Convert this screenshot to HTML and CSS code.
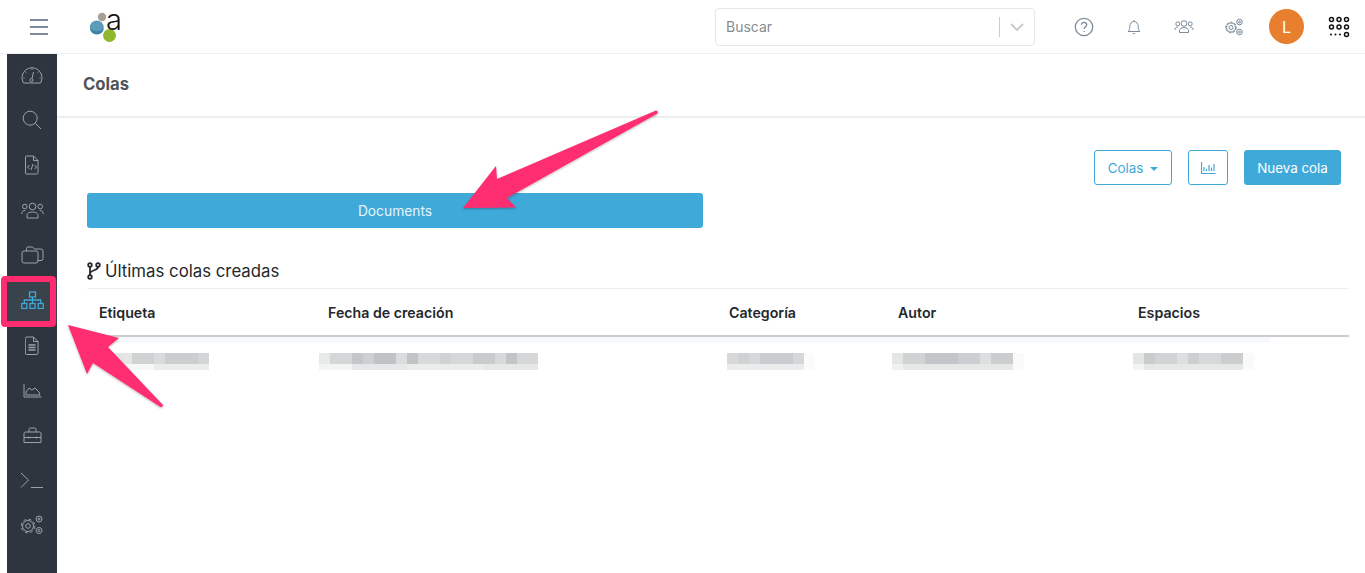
FILE: index.html

```html
<!DOCTYPE html>
<html>
<head>
  <title>Colas</title>
  <link rel="stylesheet" href="styles.css">
</head>
<body>
  <header class="topbar">
    <button class="burger"><span></span><span></span><span></span></button>
    <div class="logo">
      <svg width="34" height="34" viewBox="0 0 34 34">
        <circle cx="12" cy="7" r="4.200" fill="#a89f98"/>
        <ellipse cx="6.800" cy="17.500" rx="7" ry="7" fill="#5b9cb8"/>
        <path d="M0 18.500a7 7 0 0 0 13.800 0a8 5 0 0 1-13.800 0z" fill="#3d83a8"/>
        <circle cx="19.500" cy="25.500" r="6.500" fill="#8fb82e"/>
        <text class="logo-a" x="16" y="20">a</text>
      </svg>
    </div>
    <div class="search">
      <span class="search-text">Buscar</span>
      <span class="search-sep"></span>
      <svg class="search-arrow" width="14" height="8" viewBox="0 0 14 8"><path d="M1 1l6 6l6-6" fill="none" stroke="#ccc" stroke-width="2"/></svg>
    </div>
    <nav class="top-icons">
      <svg class="top-icon" width="20" height="20" viewBox="0 0 20 20"><circle cx="10" cy="10" r="8.700"/><path d="M7.500 7.800c0-3.300 5.200-3.300 5.200 0c0 2-2.600 2-2.600 4.200M10.100 14v1"/></svg>
      <svg class="top-icon" width="16" height="16" viewBox="0 0 16 16"><path d="M2 12.500c1.500-1 1.800-2.500 1.800-5c0-3 1.800-5 4.200-5s4.200 2 4.200 5c0 2.500.3 4 1.800 5zM6.700 14c.5 1 2.100 1 2.600 0M8 1v1.500"/></svg>
      <svg class="top-icon" width="20" height="16" viewBox="0 0 20 16"><circle cx="10" cy="4.500" r="2.800"/><circle cx="3.800" cy="4.800" r="2"/><circle cx="16.200" cy="4.800" r="2"/><path d="M5.500 13.500v-2c0-2 2-2.800 4.500-2.800s4.500 .8 4.500 2.800v2zM1 11c0-2 1-3 3-3M19 11c0-2-1-3-3-3"/></svg>
      <svg class="top-icon" width="20" height="18" viewBox="0 0 20 18"><circle cx="7" cy="9.500" r="2"/><circle cx="7" cy="9.500" r="5.300" stroke-dasharray="2.500 1.400"/><circle cx="7" cy="9.500" r="4.500"/><circle cx="15.500" cy="4" r="2.800"/><circle cx="15.500" cy="4" r="1"/><circle cx="15.500" cy="14" r="2.800"/><circle cx="15.500" cy="14" r="1"/></svg>
      <div class="avatar">L</div>
      <svg class="apps" width="22" height="22" viewBox="0 0 22 22">
        <g fill="none" stroke="#111" stroke-width="1.500">
          <circle cx="3.500" cy="3.500" r="2"/><circle cx="11" cy="3.500" r="2"/><circle cx="18.500" cy="3.500" r="2"/>
          <circle cx="3.500" cy="11" r="2"/><circle cx="11" cy="11" r="2"/><circle cx="18.500" cy="11" r="2"/>
          <circle cx="18.500" cy="18.500" r="2"/>
        </g>
        <g fill="#111"><circle cx="3" cy="18.500" r="1"/><circle cx="7.500" cy="18.500" r="1"/><circle cx="12" cy="18.500" r="1"/></g>
      </svg>
    </nav>
  </header>

  <div class="layout">
    <aside class="sidebar">
      <div class="side-item">
        <svg width="22" height="18" viewBox="0 0 22 18"><path d="M2.500 17a10 10 0 1 1 17 0zM11 2.500v1.500M4.500 6l1 .7M17.500 6l-1 .7M2.500 12h1M18.500 12h1"/><circle cx="10.500" cy="14" r="1.600"/><path d="M11 12.500l1.500-6.500"/></svg>
      </div>
      <div class="side-item">
        <svg width="20" height="20" viewBox="0 0 20 20"><circle cx="8.200" cy="8.200" r="7"/><path d="M13.300 13.300l5.700 5.700"/></svg>
      </div>
      <div class="side-item">
        <svg width="14" height="20" viewBox="0 0 14 20"><path d="M1.500 1h7l4.500 4.500v12a1.500 1.500 0 0 1-1.500 1.500h-10a1 1 0 0 1-1-1v-16a1 1 0 0 1 1-1zM8.500 1v4.500h4.500M4.500 10l-2 2l2 2M9.500 10l2 2l-2 2M8 9l-2 6"/></svg>
      </div>
      <div class="side-item">
        <svg width="23" height="17" viewBox="0 0 23 17"><circle cx="11.500" cy="4.500" r="3.300"/><circle cx="3.800" cy="4.500" r="2.300"/><circle cx="19.200" cy="4.500" r="2.300"/><path d="M6 16v-2.500c0-2.500 2.500-3.500 5.500-3.500s5.500 1 5.500 3.500v2.500zM.8 12c0-2.500 1-3.500 3.500-3.500M22.200 12c0-2.500-1-3.500-3.500-3.500"/></svg>
      </div>
      <div class="side-item">
        <svg width="23" height="18" viewBox="0 0 23 18"><path d="M5.500 5v-2.500a1.500 1.500 0 0 1 1.500-1.500h4.500l2 2h6.500a2 2 0 0 1 2 2v7.500a2 2 0 0 1-2 2h-3.500"/><rect x="1" y="5" width="16" height="12" rx="2"/></svg>
      </div>
      <div class="side-item side-item-active">
        <svg width="23" height="18" viewBox="0 0 23 18"><rect x="8.500" y="1" width="6" height="5"/><rect x=".8" y="12.500" width="5" height="5"/><rect x="9" y="12.500" width="5" height="5"/><rect x="17.200" y="12.500" width="5" height="5"/><path d="M11.500 6v6.500M3.300 12.500v-3.500h16.400v3.500"/></svg>
      </div>
      <div class="side-item">
        <svg width="14" height="19" viewBox="0 0 14 19"><path d="M1.800 1h6.700l4.500 4.500v11.500a1.500 1.500 0 0 1-1.500 1.500h-9.700a1.500 1.500 0 0 1-1.500-1.500v-14.500a1.500 1.500 0 0 1 1.500-1.500zM8.500 1v4.500h4.500"/><path class="thick" d="M3.500 9h7M3.500 11.500h7M3.500 14h7"/></svg>
      </div>
      <div class="side-item">
        <svg width="19" height="15" viewBox="0 0 19 15"><path d="M1 1v13h17.500M3 12v-3l3-4l3 2l3-2l4 4l1 3z"/></svg>
      </div>
      <div class="side-item">
        <svg width="19" height="17" viewBox="0 0 19 17"><path d="M1 6.500a1.500 1.500 0 0 1 1.500-1.500h14a1.500 1.500 0 0 1 1.500 1.500v9h-17zM6 5v-2.500a1.500 1.500 0 0 1 1.500-1.500h4a1.500 1.500 0 0 1 1.500 1.500v2.500M1 10.500h17M5.500 9.500v2M13.500 9.500v2"/></svg>
      </div>
      <div class="side-item">
        <svg width="24" height="17" viewBox="0 0 24 17"><path d="M1 1l7.500 7l-7.500 7.500M11 15.500h12"/></svg>
      </div>
      <div class="side-item">
        <svg width="24" height="20" viewBox="0 0 24 20"><circle cx="8" cy="11" r="2.300"/><circle cx="8" cy="11" r="5.500"/><circle cx="8" cy="11" r="6.800" stroke-dasharray="3 2.400"/><circle cx="19" cy="4" r="3"/><circle cx="19" cy="4" r="1"/><circle cx="19" cy="15.500" r="3"/><circle cx="19" cy="15.500" r="1"/></svg>
      </div>
    </aside>

    <main class="content">
      <div class="page-title">Colas</div>
      <div class="page-body">
        <div class="toolbar">
          <button class="btn btn-outline btn-menu">Colas<span class="caret"></span></button>
          <button class="btn btn-outline btn-chart">
            <svg width="15" height="13" viewBox="0 0 15 13"><path d="M.5 1v11.500h14M3 6v4M5.500 8v2M8 4v6M10.500 6.500v3.500M13 3v7" fill="none" stroke="#3fa9d9" stroke-width="1.200"/></svg>
          </button>
          <button class="btn btn-solid">Nueva cola</button>
        </div>
        <button class="queue-btn">Documents</button>
        <h2 class="section-title">
          <svg width="14" height="18" viewBox="0 0 14 18"><g fill="none" stroke="#23282c" stroke-width="1.800"><circle cx="3" cy="3" r="1.800"/><circle cx="3" cy="15" r="1.800"/><circle cx="11" cy="3" r="1.800"/><path d="M3 5v8M11 5c0 4-8 2.500-8 7"/></g></svg>
          Últimas colas creadas
        </h2>
        <div class="table">
          <div class="table-head">
            <div>Etiqueta</div>
            <div>Fecha de creación</div>
            <div>Categoría</div>
            <div>Autor</div>
            <div>Espacios</div>
          </div>
          <div class="table-strip"></div>
          <div class="table-row">
            <div><div class="mosaic mosaic-1"></div></div>
            <div><div class="mosaic mosaic-2"></div></div>
            <div><div class="mosaic mosaic-3"></div></div>
            <div><div class="mosaic mosaic-4"></div></div>
            <div><div class="mosaic mosaic-5"></div></div>
          </div>
        </div>
      </div>
    </main>
  </div>

  <div class="highlight"></div>
  <svg class="arrows" width="1365" height="573" viewBox="0 0 1365 573">
    <defs>
      <filter id="arrow-shadow" x="-10%" y="-10%" width="120%" height="120%">
        <feDropShadow dx="0" dy="1" stdDeviation="1" flood-color="#000" flood-opacity=".3"/>
      </filter>
    </defs>
    <g fill="#ff2d6f" filter="url(#arrow-shadow)">
      <path d="M656 110.500q2.500 .5 1.500 3l-150.500 84.500l9 9.500l-53 0.500l33-42l1 13z"/>
      <path d="M68 325l51 13l-11 9l55 58q0 2.500-2.500 2l-67.500-44l-6 11z"/>
    </g>
  </svg>
</body>
</html>
```

FILE: styles.css

```css
* {
  box-sizing: border-box;
}
html, body {
  margin: 0;
  height: 573px;
  overflow: hidden;
}
body {
  font-family: "Inter", "Liberation Sans", sans-serif;
  font-size: 14px;
  color: #23282c;
  background-color: #fff;
}
button {
  font-family: inherit;
}

/* top bar */
.topbar {
  display: flex;
  align-items: center;
  height: 54px;
  border-bottom: 1px solid #eceeef;
}
.burger {
  display: flex;
  flex-direction: column;
  gap: 5px;
  width: 18px;
  margin: 0 0 0 30px;
  padding: 0;
  border: none;
  background: none;
}
.burger span {
  display: block;
  height: 2px;
  background-color: #7d8a99;
}
.logo {
  display: flex;
  margin-left: 42px;
}
.logo svg {
  overflow: visible;
}
.logo-a {
  font-family: "Inter", sans-serif;
  font-size: 29px;
  font-weight: 300;
  fill: #111;
}
.search {
  display: flex;
  align-items: center;
  width: 320px;
  height: 38px;
  margin-left: 591px;
  padding-left: 10px;
  border: 1px solid #e4e7ea;
  border-radius: 4px;
}
.search-text {
  flex: 1;
  color: #878c90;
  font-size: 14px;
}
.search-sep {
  width: 1px;
  height: 20px;
  background-color: #ccc;
}
.search-arrow {
  margin: 0 10px;
}
.top-icons {
  display: flex;
  align-items: center;
  margin-left: 39px;
}
.top-icon {
  fill: none;
  stroke: #7b8a9a;
  stroke-width: 1;
}
.top-icon:nth-child(1) {
  stroke-width: 1.300;
}
.top-icon:nth-child(2) {
  margin-left: 32px;
}
.top-icon:nth-child(3) {
  margin-left: 32px;
}
.top-icon:nth-child(4) {
  margin-left: 30px;
}
.avatar {
  display: flex;
  align-items: center;
  justify-content: center;
  width: 35px;
  height: 35px;
  margin-left: 25px;
  border-radius: 50%;
  background-color: #e87f2e;
  color: #fff;
  font-size: 16px;
}
.apps {
  margin-left: 24px;
}

/* sidebar */
.layout {
  display: flex;
  height: 519px;
  padding-left: 7px;
}
.sidebar {
  flex: none;
  width: 50px;
  background-color: #2f353e;
}
.side-item {
  display: flex;
  align-items: center;
  justify-content: center;
  height: 45px;
  padding-bottom: 3px;
}
.side-item svg {
  fill: none;
  stroke: #9aa3ad;
  stroke-width: 1;
}
.side-item .thick {
  stroke-width: 1.300;
}
.side-item-active {
  background-color: #3a424b;
}
.side-item-active svg {
  stroke: #3fa9d9;
  stroke-width: 1.300;
}

/* main */
.content {
  flex: 1;
}
.page-title {
  height: 64px;
  padding: 20px 26px 0;
  border-bottom: 2px solid #edefef;
  color: #4f5459;
  font-size: 16.700px;
  font-weight: 700;
  line-height: 20px;
}
.page-body {
  padding: 32px 16px 0 30px;
}
.toolbar {
  display: flex;
  justify-content: flex-end;
  gap: 16px;
  padding-right: 8px;
}
.btn {
  height: 35px;
  border-radius: 3px;
  border: 1px solid #3fa9d9;
  font-size: 13.400px;
  padding: 0 13px;
}
.btn-outline {
  background-color: #fff;
  color: #3fa9d9;
}
.btn-menu {
  width: 78px;
  padding: 0;
}
.btn-chart {
  display: flex;
  align-items: center;
  justify-content: center;
  width: 40px;
  padding: 0;
}
.btn-solid {
  background-color: #3fa9d9;
  color: #fff;
  width: 97px;
  padding: 0;
}
.caret {
  display: inline-block;
  margin-left: 7px;
  border-top: 4px solid #3fa9d9;
  border-left: 4px solid transparent;
  border-right: 4px solid transparent;
  vertical-align: 2px;
}
.queue-btn {
  display: block;
  width: 616px;
  height: 35px;
  margin-top: 8px;
  border: none;
  border-radius: 3px;
  background-color: #3fa9d9;
  color: #e6f4fb;
  font-size: 13.800px;
}
.section-title {
  display: flex;
  align-items: center;
  gap: 4px;
  height: 32px;
  margin: 27px 0 0;
  font-size: 16.800px;
  font-weight: 400;
}

/* table */
.table {
  border-top: 1px solid #eceeef;
  margin-top: 1px;
}
.table-head, .table-row {
  display: grid;
  grid-template-columns: 229px 401px 169px 240px 1fr;
  padding-left: 12px;
}
.table-head {
  height: 48px;
  align-items: center;
  border-bottom: 2px solid #c8ced3;
  font-size: 14.200px;
  font-weight: 600;
}
.table-strip {
  width: 1183px;
  height: 6px;
  background-color: #f7f9fa;
}
.table-row {
  padding-top: 10px;
}
.mosaic {
  height: 17px;
  background-repeat: no-repeat;
  background-size: 100% 11px, 100% 6px;
  background-position: 0 0, 0 11px;
}
.mosaic-1 {
  width: 99px;
  margin-left: 11px;
  background-image:
    linear-gradient(90deg, #e4e6e6 0 22px, #cfd1d3 22px 44px, #d8dadb 44px 55px, #cbcdcf 55px 88px, #d3d5d7 88px),
    linear-gradient(90deg, #f6f7f7 0 44px, #ebeded 44px);
}
.mosaic-2 {
  width: 219px;
  margin-left: -9px;
  background-image:
    linear-gradient(90deg, #e8eaea 0 11px, #d4d6d8 11px 33px, #c4c6c9 33px 44px, #cdcfd1 44px 55px, #c0c2c5 55px 77px, #dbdddd 77px 88px, #c1c4c6 88px 99px, #d7d9da 99px 121px, #cfd1d3 121px 132px, #d5d7d8 132px 154px, #c9cbcd 154px 176px, #d7d9da 176px 187px, #c2c4c7 187px 198px, #d5d7d9 198px),
    linear-gradient(90deg, #f2f3f3 0 33px, #e6e8e8 33px 88px, #ebeded 88px 165px, #e6e8e8 165px);
}
.mosaic-3 {
  width: 88px;
  margin-left: -2px;
  background-image:
    linear-gradient(90deg, #d6d8da 0 11px, #cfd1d3 11px 22px, #d6d8da 22px 33px, #cacccf 33px 66px, #d5d7d9 66px 77px, #fbfbfb 77px),
    linear-gradient(90deg, #ebeded 0 77px, #fbfbfb 77px);
}
.mosaic-4 {
  width: 132px;
  margin-left: -6px;
  background-image:
    linear-gradient(90deg, #e4e6e6 0 11px, #d0d2d4 11px 33px, #c3c5c8 33px 66px, #cccfd1 66px 88px, #dcdedf 88px 99px, #cbcdcf 99px 121px, #fafafa 121px),
    linear-gradient(90deg, #f0f1f1 0 11px, #e6e8e8 11px 121px, #fafafa 121px);
}
.mosaic-5 {
  width: 121px;
  margin-left: -5px;
  background-image:
    linear-gradient(90deg, #e4e6e6 0 11px, #c9cbcd 11px 22px, #d1d3d5 22px 44px, #dcdedf 44px 55px, #ccced0 55px 66px, #d6d8da 66px 88px, #cbcdcf 88px 110px, #fafafa 110px),
    linear-gradient(90deg, #f2f3f3 0 11px, #e6e8e8 11px 110px, #fafafa 110px);
}

/* annotations on top of the screenshot */
.highlight {
  position: absolute;
  left: 1px;
  top: 276px;
  width: 55px;
  height: 51px;
  border: 6px solid #ff2d6f;
  border-radius: 4px;
}
.arrows {
  position: absolute;
  left: 0;
  top: 0;
  pointer-events: none;
}
```
